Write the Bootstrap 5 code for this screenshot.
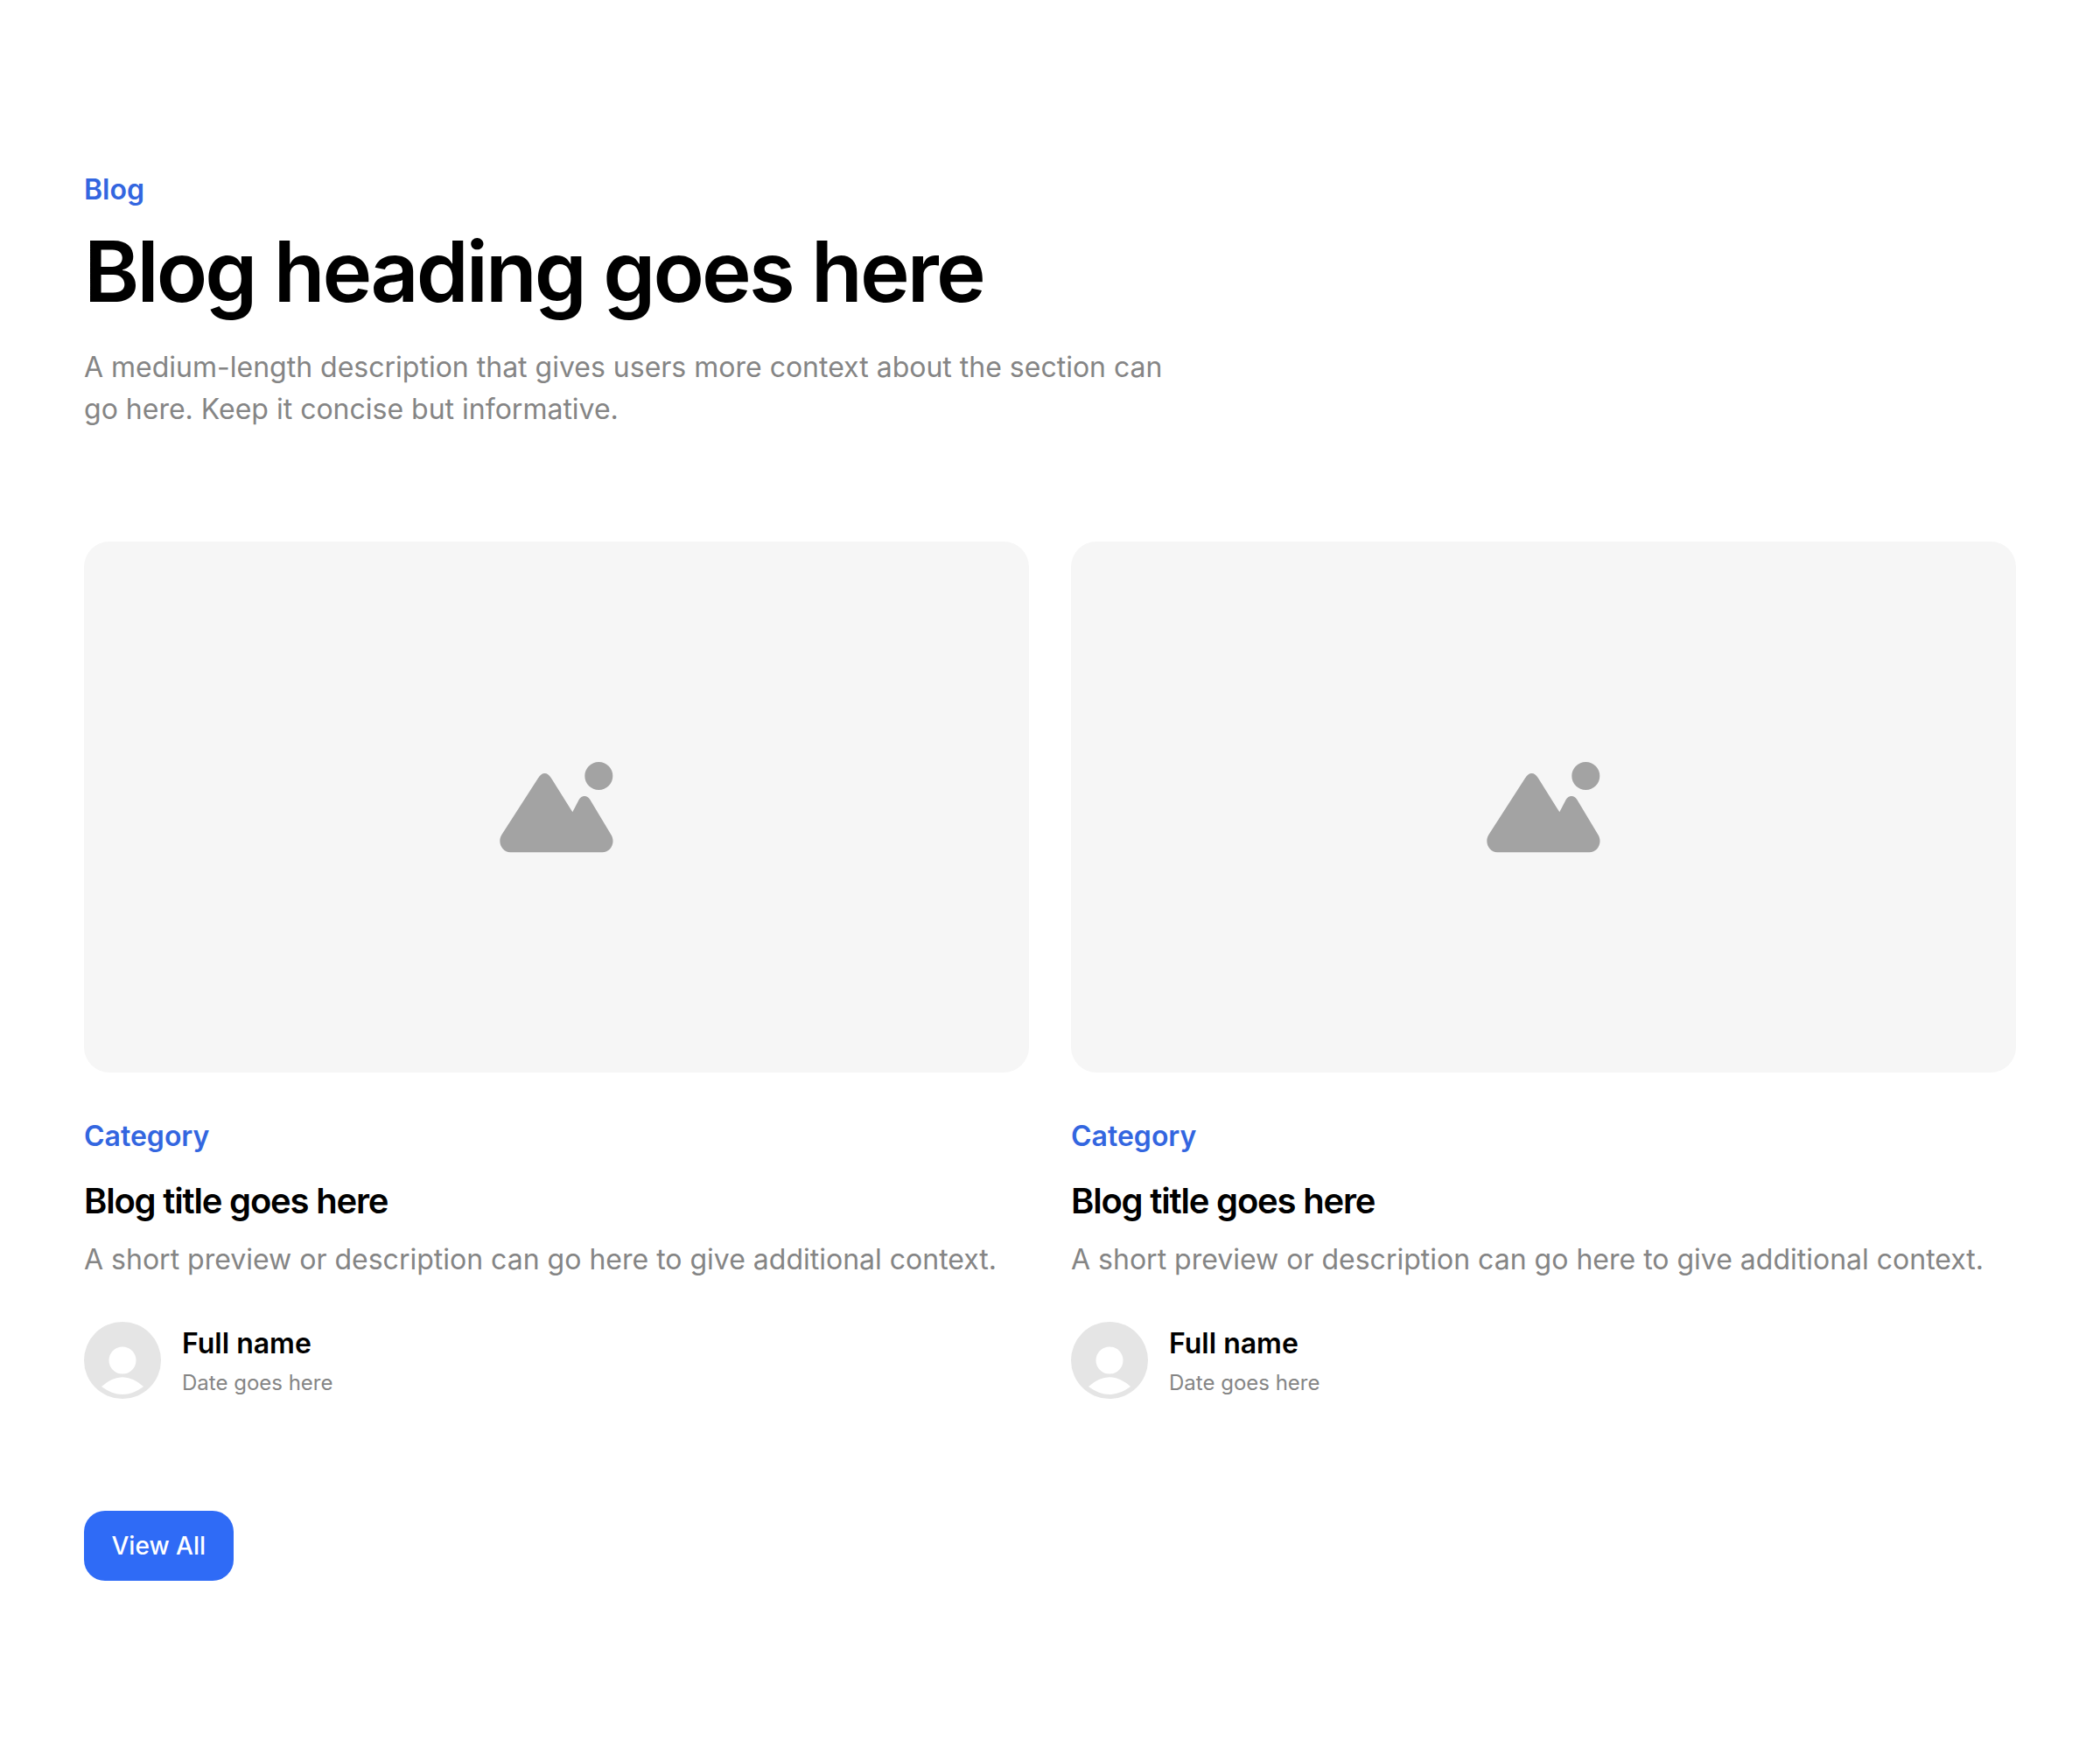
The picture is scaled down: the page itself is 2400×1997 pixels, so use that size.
<!DOCTYPE html>
<html lang="en">

<head>
    <meta charset="UTF-8">
    <meta name="viewport" content="width=device-width, initial-scale=1.0">
    <title>Blog</title>
    <link href="https://cdn.jsdelivr.net/npm/bootstrap@5.3.0/dist/css/bootstrap.min.css" rel="stylesheet">
    <style>
        body {
            background-color: #fff;
            font-family: Inter, "Liberation Sans", sans-serif;
            color: #000;
        }

        .blog-section {
            padding: 193px 96px 192px;
        }

        .blog-eyebrow {
            color: #3366e0;
            font-size: 32px;
            line-height: 48px;
            font-weight: 600;
            margin-bottom: 16px;
        }

        .blog-heading {
            font-size: 96px;
            line-height: 106px;
            font-weight: 600;
            letter-spacing: -0.03em;
            margin-bottom: 33px;
        }

        .blog-lede {
            color: #858585;
            font-size: 32px;
            line-height: 48px;
            max-width: 1280px;
            margin-bottom: 127px;
        }

        .post-grid {
            --bs-gutter-x: 48px;
            --bs-gutter-y: 0;
        }

        .post-thumb {
            height: 607px;
            background-color: #f6f6f6;
            border-radius: 29px;
            margin-bottom: 49px;
        }

        .post-category {
            color: #3366e0;
            font-size: 32px;
            line-height: 48px;
            font-weight: 600;
            margin-bottom: 20px;
        }

        .post-title {
            font-size: 40px;
            line-height: 60px;
            font-weight: 600;
            letter-spacing: -0.03em;
            margin-bottom: 13px;
        }

        .post-text {
            color: #858585;
            font-size: 32px;
            line-height: 48px;
            margin-bottom: 47px;
        }

        .post-name {
            font-size: 32px;
            line-height: 46px;
            font-weight: 600;
            margin-bottom: 6px;
        }

        .post-date {
            color: #858585;
            font-size: 24px;
            line-height: 32px;
        }

        .btn.view-all {
            --bs-btn-bg: #2f6bf6;
            --bs-btn-border-color: #2f6bf6;
            --bs-btn-hover-bg: #2a60de;
            --bs-btn-hover-border-color: #2a60de;
            font-size: 28px;
            line-height: 40px;
            font-weight: 500;
            padding: 20px 31.5px;
            border-radius: 24px;
            border: 0;
            margin-top: 128px;
        }
    </style>
</head>

<body>
    <section class="blog-section">
        <div class="blog-eyebrow">Blog</div>
        <h1 class="blog-heading">Blog heading goes here</h1>
        <p class="blog-lede">A medium-length description that gives users more context about the section can go here. Keep it concise but informative.</p>

        <div class="row row-cols-2 post-grid">
            <div class="col">
                <div class="post-thumb d-flex align-items-center justify-content-center">
                    <svg width="130" height="104" viewBox="0 0 130 104" fill="#a3a3a3">
                        <circle cx="113.3" cy="16" r="16" />
                        <path d="M12.3 103.3H117.3C127 103.3 133 92 127.3 83L103.3 43C100 37.5 94 37.5 90.7 43L83.3 57.3L59 18.5C55 11 48 11 44 18.5L2.3 83.3C-3 92 3 103.3 12.3 103.3Z" />
                    </svg>
                </div>
                <div class="post-category">Category</div>
                <h2 class="post-title">Blog title goes here</h2>
                <p class="post-text">A short preview or description can go here to give additional context.</p>
                <div class="d-flex align-items-center gap-4">
                    <svg width="88" height="88" viewBox="0 0 88 88">
                        <circle cx="44" cy="44" r="44" fill="#e5e5e5" />
                        <circle cx="44" cy="44" r="15.5" fill="#fff" />
                        <path d="M20 74Q44 52.6 68 74Q44 92 20 74Z" fill="#fff" />
                    </svg>
                    <div>
                        <div class="post-name">Full name</div>
                        <div class="post-date">Date goes here</div>
                    </div>
                </div>
            </div>
            <div class="col">
                <div class="post-thumb d-flex align-items-center justify-content-center">
                    <svg width="130" height="104" viewBox="0 0 130 104" fill="#a3a3a3">
                        <circle cx="113.3" cy="16" r="16" />
                        <path d="M12.3 103.3H117.3C127 103.3 133 92 127.3 83L103.3 43C100 37.5 94 37.5 90.7 43L83.3 57.3L59 18.5C55 11 48 11 44 18.5L2.3 83.3C-3 92 3 103.3 12.3 103.3Z" />
                    </svg>
                </div>
                <div class="post-category">Category</div>
                <h2 class="post-title">Blog title goes here</h2>
                <p class="post-text">A short preview or description can go here to give additional context.</p>
                <div class="d-flex align-items-center gap-4">
                    <svg width="88" height="88" viewBox="0 0 88 88">
                        <circle cx="44" cy="44" r="44" fill="#e5e5e5" />
                        <circle cx="44" cy="44" r="15.5" fill="#fff" />
                        <path d="M20 74Q44 52.6 68 74Q44 92 20 74Z" fill="#fff" />
                    </svg>
                    <div>
                        <div class="post-name">Full name</div>
                        <div class="post-date">Date goes here</div>
                    </div>
                </div>
            </div>
        </div>

        <a href="#" class="btn btn-primary view-all">View All</a>
    </section>

    <script src="https://cdn.jsdelivr.net/npm/bootstrap@5.3.0/dist/js/bootstrap.bundle.min.js"></script>
</body>

</html>
